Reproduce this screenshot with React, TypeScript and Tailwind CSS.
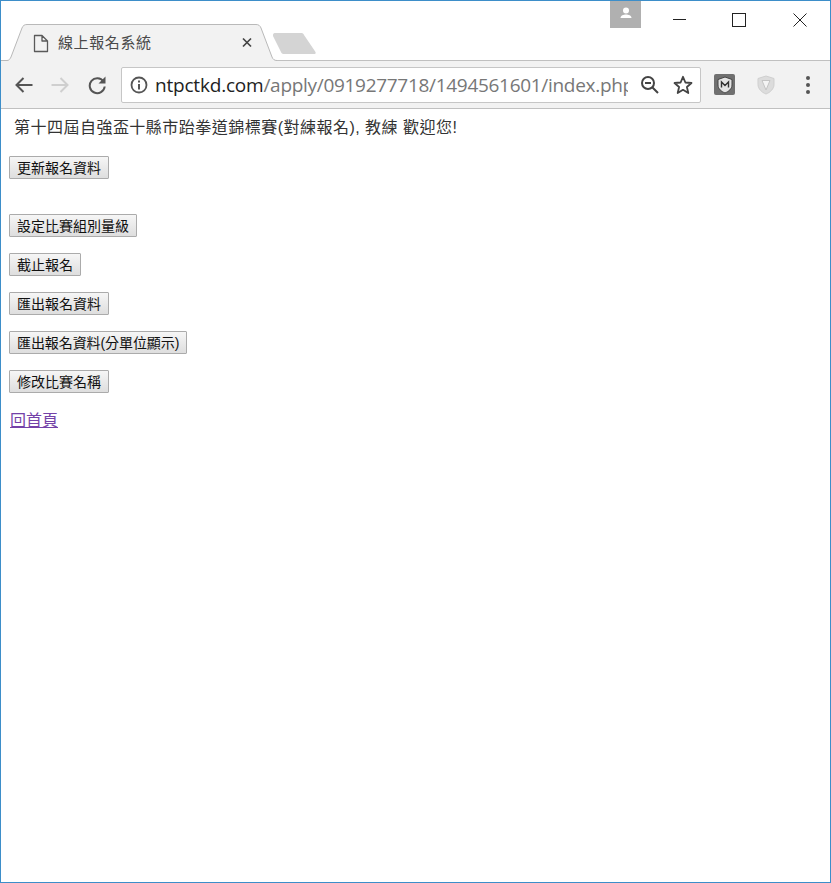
const cjk = "font-['Liberation_Sans','Noto_Sans_CJK_TC',sans-serif]";

function PageButton({ label, tight }: { label: string; tight?: boolean }) {
  return (
    <button
      className={`block h-[23px] rounded-[1px] border border-[#ababab] bg-gradient-to-b from-[#f6f6f6] to-[#dedede] px-[7px] text-[14px] leading-[20px] text-[#111] ${
        tight ? "tracking-[-0.080px]" : ""
      }`}
    >
      {label}
    </button>
  );
}

function TitleBar() {
  return (
    <div className="relative h-[60px] border-b border-[#c0c0c0] bg-white">
      {/* tab sits over the bottom line of the title bar */}
      <svg className="absolute left-[-1px] top-[-1px]" width="330" height="63" viewBox="0 0 330 63" fill="none">
        <path d="M0 62V60.500H7C9 60.500 10 59 11 57L22 28C23 25.500 24.500 24.500 27 24.500H256C258.500 24.500 260 25.500 261 28L272 57C273 59.500 274.500 60.500 277 60.500V62Z" fill="#f2f2f2" />
        <path d="M1 60.500H7C9 60.500 10 59 11 57L22 28C23 25.500 24.500 24.500 27 24.500H256C258.500 24.500 260 25.500 261 28L272 57C273 59.500 274.500 60.500 277 60.500" stroke="#b9b9b9" />
        <path d="M273 35C273 33.500 274 33 275.500 33H301C302.500 33 303.500 33.500 304 35L315.500 52C316 53.500 315.500 54 314 54H284C282.500 54 281.500 53.500 281 52L273 36Z" fill="#d4d4d4" />
        <path d="M34.500 35.500H42L47.500 41V51.500H34.500Z M42 35.500V41H47.500" stroke="#5a5a5a" strokeWidth="1.300" strokeLinejoin="round" />
        <path d="M243 38.500L251 46.500M251 38.500L243 46.500" stroke="#444" strokeWidth="1.700" />
      </svg>
      <span className="absolute left-[57px] top-[32px] text-[15px] leading-[20px] tracking-[0.600px] text-[#4a4a4a]">線上報名系統</span>
      <div className="absolute left-[609px] top-0 flex h-[27px] w-[31px] justify-center bg-[#b0b0b0] pt-[6px]">
        <svg width="14" height="13" viewBox="0 0 14 13" fill="white">
          <circle cx="7" cy="3.500" r="3" />
          <path d="M1.500 11C1.500 8.500 4.500 7.500 7 7.500S12.500 8.500 12.500 11Z" />
        </svg>
      </div>
      <svg className="absolute left-[669px] top-[9px]" width="145" height="20" viewBox="0 0 145 20" fill="none" stroke="#222" strokeWidth="1">
        <path d="M3 9.500H16" />
        <rect x="62.500" y="3.500" width="13" height="13" />
        <path d="M123.500 3.500L136.500 16.500M136.500 3.500L123.500 16.500" />
      </svg>
    </div>
  );
}

function Toolbar() {
  return (
    <div className="flex h-[48px] items-center border-b border-[#c0c0c0] bg-[#f2f2f2]">
      <svg className="ml-[13px] shrink-0" width="20" height="20" viewBox="0 0 20 20" fill="none" stroke="#555" strokeWidth="2">
        <path d="M18.500 10H2.500M9.500 3L2.500 10L9.500 17" />
      </svg>
      <svg className="ml-[16px] shrink-0" width="20" height="20" viewBox="0 0 20 20" fill="none" stroke="#cfcfcf" strokeWidth="2">
        <path d="M1.500 10H17.500M10.500 3L17.500 10L10.500 17" />
      </svg>
      <svg className="ml-[17px] shrink-0" width="20" height="20" viewBox="0 0 20 20" fill="none">
        <path d="M16.500 6.500A7.500 7.500 0 1 0 17.700 11.500" stroke="#555" strokeWidth="2" />
        <path d="M18.500 1.500V8.500H11.500Z" fill="#555" />
      </svg>
      <div className="ml-[14px] flex h-[36px] w-[580px] shrink-0 items-center rounded-[2px] border border-[#c6c6c6] bg-white">
        <svg className="ml-[8px] shrink-0" width="18" height="18" viewBox="0 0 18 18" fill="none" stroke="#555">
          <circle cx="9" cy="9" r="7.500" strokeWidth="1.800" />
          <path d="M9 8V13.500" strokeWidth="2" />
          <path d="M9 4.500V6.500" strokeWidth="2" />
        </svg>
        <div className="ml-[7px] w-[473px] overflow-hidden whitespace-nowrap font-['Open_Sans',sans-serif] text-[19px] leading-[26px] tracking-[-0.200px] text-[#777]">
          <span className="text-[#222]">ntpctkd.com</span>
          <span className="tracking-[-0.300px]">/apply/0919277718/1494561601/index.php</span>
        </div>
        <svg className="ml-[12px] shrink-0" width="20" height="20" viewBox="0 0 20 20" fill="none" stroke="#444" strokeWidth="2">
          <circle cx="8" cy="8" r="6" />
          <path d="M5 8H11M12.500 12.500L18 18" />
        </svg>
        <svg className="ml-[13px] shrink-0" width="20" height="20" viewBox="0 0 20 20" fill="none" stroke="#444" strokeWidth="1.800" strokeLinejoin="round">
          <path d="M10 1.800L12.400 7.500L18.500 8L13.900 12L15.300 18L10 14.800L4.700 18L6.100 12L1.500 8L7.600 7.500Z" />
        </svg>
      </div>
      <div className="ml-[13px] flex h-[21px] w-[21px] shrink-0 items-center justify-center rounded-[2px] bg-[#707070]">
        <svg width="18" height="18" viewBox="0 0 18 18">
          <path d="M9 1L16 3.500V9C16 13 12.500 15.500 9 17C5.500 15.500 2 13 2 9V3.500Z" fill="#e4e4e4" stroke="#444" />
          <path d="M5.500 11.500V6L9 9.500L12.500 6V11.500" fill="none" stroke="#333" strokeWidth="1.400" />
        </svg>
      </div>
      <svg className="ml-[21px] shrink-0" width="20" height="20" viewBox="0 0 20 20">
        <path d="M10 1L18 3.500V9.500C18 14 14 17.500 10 19C6 17.500 2 14 2 9.500V3.500Z" fill="#dcdcdc" stroke="#cfcfcf" />
        <path d="M6 5.500H14L10 15Z" fill="#f4f4f4" stroke="#c4c4c4" />
      </svg>
      <div className="ml-[30px] flex shrink-0 flex-col gap-[3px]">
        <div className="size-[4px] rounded-full bg-[#555]" />
        <div className="size-[4px] rounded-full bg-[#555]" />
        <div className="size-[4px] rounded-full bg-[#555]" />
      </div>
    </div>
  );
}

export default function App() {
  return (
    <div lang="zh-TW" className={`h-[883px] w-[831px] overflow-hidden border border-[#3d8ec9] bg-white ${cjk}`}>
      <TitleBar />
      <Toolbar />
      <div className="px-[8px]">
        <p className="pl-[5px] pt-[9px] text-[16px] leading-[20px] tracking-[0.480px] text-[#333]">
          第十四屆自強盃十縣市跆拳道錦標賽(對練報名), 教練 歡迎您!
        </p>
        <div className="mt-[18px] flex flex-col items-start">
          <PageButton label="更新報名資料" />
          <div className="mt-[35px] flex flex-col items-start gap-[16px]">
            <PageButton label="設定比賽組別量級" />
            <PageButton label="截止報名" />
            <PageButton label="匯出報名資料" />
            <PageButton label="匯出報名資料(分單位顯示)" tight />
            <PageButton label="修改比賽名稱" />
          </div>
        </div>
        <a href="#" className="ml-[1px] mt-[18px] block text-[16px] leading-[20px] text-[#7442a8] underline">
          回首頁
        </a>
      </div>
    </div>
  );
}
